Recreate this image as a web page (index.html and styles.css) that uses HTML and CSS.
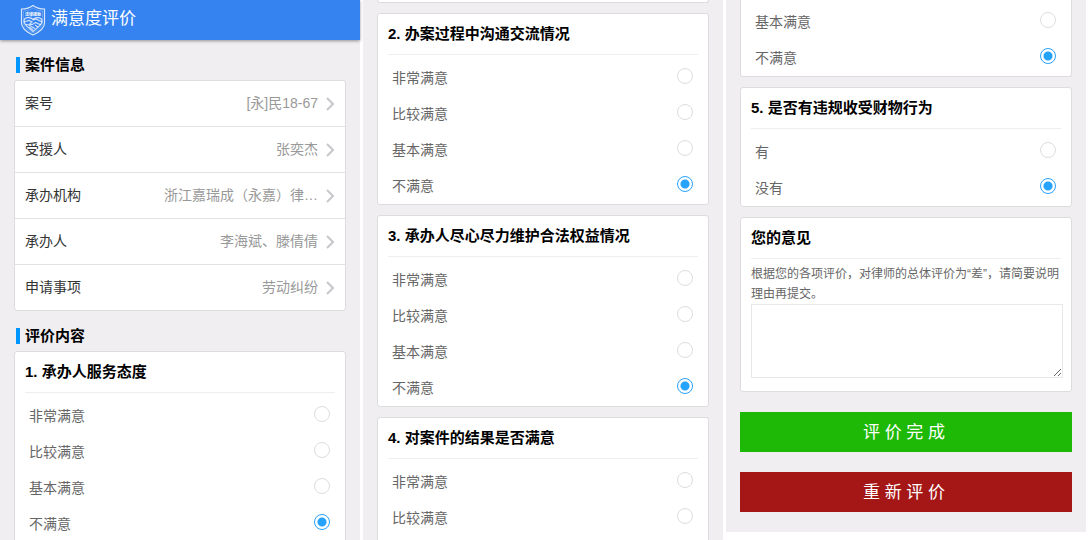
FILE: index.html
```
<!DOCTYPE html>
<html lang="zh-CN">
<head>
    <meta charset="UTF-8">
    <meta name="viewport" content="width=device-width, initial-scale=1.0">
    <title>满意度评价</title>
    <link rel="stylesheet" href="styles.css">
</head>
<body>
    <div class="pages">
        <div class="page">
            <header class="header">
                <svg class="logo" viewBox="0 0 26 32" aria-hidden="true">
                    <path class="shield" d="M13 1.500C10 3.800 6 5 1.500 5v14c0 5.500 5 9 11.500 12 6.500-3 11.500-6.500 11.500-12V5c-4.500 0-8.500-1.200-11.500-3.500z"/>
                    <path class="shield-inner" d="M13 4C10 6 7 7 3.500 7v12c0 4.500 4.500 7.200 9.500 9.800 5-2.600 9.500-5.300 9.500-9.800V7c-3.500 0-6.500-1-9.500-3z"/>
                    <text class="logo-text" x="13" y="12" text-anchor="middle">法律援助</text>
                    <path class="heart" d="M13 15.500c-2.500-3-9-2.500-9 1.800 0 3.700 5 6.700 9 10.200 4-3.500 9-6.500 9-10.200 0-4.300-6.500-4.800-9-1.800z"/>
                    <path class="heart" d="M4 18l5-1.500 3 1.500-2.500 2.200 3 .3 3-2 5.500 2.500M13 16l3-1 6 3M5.500 20.500l3.500.5 6 3.500M9 23l4 2.500M15 21l3 2"/>
                </svg>
                <h1>满意度评价</h1>
            </header>
            <main class="content">
                <h2 class="section-title">案件信息</h2>
                <ul class="card info">
                    <li><a href="#"><span>案号</span><span class="value">[永]民18-67</span><svg class="arrow" viewBox="0 0 8 14"><path d="M1 1l6 6-6 6"/></svg></a></li>
                    <li><a href="#"><span>受援人</span><span class="value">张奕杰</span><svg class="arrow" viewBox="0 0 8 14"><path d="M1 1l6 6-6 6"/></svg></a></li>
                    <li><a href="#"><span>承办机构</span><span class="value">浙江嘉瑞成（永嘉）律…</span><svg class="arrow" viewBox="0 0 8 14"><path d="M1 1l6 6-6 6"/></svg></a></li>
                    <li><a href="#"><span>承办人</span><span class="value">李海斌、滕倩倩</span><svg class="arrow" viewBox="0 0 8 14"><path d="M1 1l6 6-6 6"/></svg></a></li>
                    <li><a href="#"><span>申请事项</span><span class="value">劳动纠纷</span><svg class="arrow" viewBox="0 0 8 14"><path d="M1 1l6 6-6 6"/></svg></a></li>
                </ul>
                <h2 class="section-title">评价内容</h2>
                <section class="card">
                    <h3>1. 承办人服务态度</h3>
                    <div class="options">
                        <label>非常满意<input type="radio" name="q1"></label>
                        <label>比较满意<input type="radio" name="q1"></label>
                        <label>基本满意<input type="radio" name="q1"></label>
                        <label>不满意<input type="radio" name="q1" checked></label>
                    </div>
                </section>
            </main>
        </div>

        <div class="page">
            <div class="content">
                <div class="card card-end"></div>
                <section class="card">
                    <h3>2. 办案过程中沟通交流情况</h3>
                    <div class="options">
                        <label>非常满意<input type="radio" name="q2"></label>
                        <label>比较满意<input type="radio" name="q2"></label>
                        <label>基本满意<input type="radio" name="q2"></label>
                        <label>不满意<input type="radio" name="q2" checked></label>
                    </div>
                </section>
                <section class="card">
                    <h3>3. 承办人尽心尽力维护合法权益情况</h3>
                    <div class="options">
                        <label>非常满意<input type="radio" name="q3"></label>
                        <label>比较满意<input type="radio" name="q3"></label>
                        <label>基本满意<input type="radio" name="q3"></label>
                        <label>不满意<input type="radio" name="q3" checked></label>
                    </div>
                </section>
                <section class="card card-start">
                    <h3>4. 对案件的结果是否满意</h3>
                    <div class="options">
                        <label>非常满意<input type="radio" name="q4"></label>
                        <label>比较满意<input type="radio" name="q4"></label>
                    </div>
                </section>
            </div>
        </div>

        <div class="page page-last">
            <div class="content">
                <section class="card card-end">
                    <div class="options">
                        <label>基本满意<input type="radio" name="q4"></label>
                        <label>不满意<input type="radio" name="q4" checked></label>
                    </div>
                </section>
                <section class="card">
                    <h3>5. 是否有违规收受财物行为</h3>
                    <div class="options">
                        <label>有<input type="radio" name="q5"></label>
                        <label>没有<input type="radio" name="q5" checked></label>
                    </div>
                </section>
                <section class="card opinion">
                    <h3><label for="opinion">您的意见</label></h3>
                    <p>根据您的各项评价，对律师的总体评价为“差”，请简要说明理由再提交。</p>
                    <textarea id="opinion"></textarea>
                </section>
                <button class="btn btn-done" type="submit">评 价 完 成</button>
                <button class="btn btn-reset" type="reset">重 新 评 价</button>
            </div>
        </div>
    </div>
</body>
</html>
```

FILE: styles.css
```
* {
    box-sizing: border-box;
    margin: 0;
    padding: 0;
}

body {
    background-color: #fff;
    color: #333;
    font-family: "Liberation Sans", "Noto Sans CJK SC", sans-serif;
    font-size: 14px;
}

.pages {
    display: grid;
    grid-template-columns: 1fr 1fr 1fr;
    gap: 3px;
    height: 100vh;
    padding-right: 6px;
    overflow: hidden;
}

.page {
    display: flex;
    flex-direction: column;
    min-width: 0;
    min-height: 0;
    background-color: #f0eef1;
}

.page-last {
    align-self: start;
    padding-bottom: 20px;
}

.header {
    display: flex;
    align-items: center;
    gap: 5px;
    height: 40px;
    flex-shrink: 0;
    padding-left: 20px;
    background-color: #3483f0;
    color: #fff;
    box-shadow: 0 1px 3px rgba(0, 0, 0, 0.4);
}

.header h1 {
    font-size: 17px;
    font-weight: normal;
    line-height: 36px;
    padding-bottom: 2px;
}

.logo {
    width: 26px;
    height: 32px;
    fill: none;
    stroke: #fff;
}

.shield {
    stroke-width: 1.2;
    opacity: 0.8;
}

.shield-inner {
    stroke-width: 0.6;
    opacity: 0.4;
}

.heart {
    stroke-width: 1.2;
    opacity: 0.75;
}

.logo-text {
    font-size: 4px;
    font-weight: bold;
    fill: #fff;
    stroke: none;
}

.content {
    display: flex;
    flex-direction: column;
    flex: 1;
    padding: 0 14px;
}

.section-title {
    display: flex;
    align-items: center;
    gap: 5px;
    padding: 17px 2px 7px;
    font-size: 15px;
    line-height: 16px;
    color: #000;
}

.section-title::before {
    content: "";
    width: 4px;
    height: 16px;
    background-color: #0096ff;
}

.card {
    flex-shrink: 0;
    padding: 0 10px;
    background-color: #fff;
    border: 1px solid #dddcdf;
    border-radius: 3px;
}

.card + .card {
    margin-top: 10px;
}

/* a card carried over from the page before */
.card-end {
    border-top: none;
    border-radius: 0 0 3px 3px;
    padding-top: 2px;
}

/* a card that goes on to the next page */
.card-start {
    flex: 1 0 auto;
    border-bottom: none;
    border-radius: 3px 3px 0 0;
}

.card h3 {
    border-bottom: 1px solid #eee;
    font-size: 15px;
    line-height: 40px;
    color: #000;
}

.info {
    padding: 0;
    list-style: none;
}

.info li + li {
    border-top: 1px solid #e2e1e3;
}

.info a {
    display: flex;
    align-items: center;
    padding: 0 11px 0 10px;
    line-height: 45px;
    color: #333;
    text-decoration: none;
}

.value {
    margin-left: auto;
    color: #999;
    white-space: nowrap;
}

.arrow {
    width: 8px;
    height: 14px;
    margin-left: 8px;
    fill: none;
    stroke: #c7c7cc;
    stroke-width: 2;
}

.options {
    padding: 5px 5px 0 4px;
}

.card-end .options {
    padding-top: 2px;
}

.options label {
    display: flex;
    align-items: flex-start;
    justify-content: space-between;
    line-height: 36px;
    color: #666;
}

.options input {
    appearance: none;
    width: 16px;
    height: 16px;
    margin-top: 8px;
    background-color: #fff;
    border: 1px solid #ddd;
    border-radius: 50%;
}

.options input:checked {
    border-color: #26a2ff;
    background: radial-gradient(circle, #26a2ff 4px, #fff 5px);
}

.opinion {
    padding-bottom: 13px;
}

.opinion p {
    padding-top: 5px;
    font-size: 12px;
    line-height: 20px;
    color: #666;
}

.opinion textarea {
    display: block;
    box-sizing: content-box;
    width: 100%;
    height: 72px;
    border: 1px solid #e8e8e8;
    resize: vertical;
}

.btn {
    height: 40px;
    margin-top: 20px;
    padding: 0 4px 4px 0;
    border: none;
    color: #fff;
    font-family: inherit;
    font-size: 17px;
    cursor: pointer;
}

.btn-done {
    background-color: #1eb906;
}

.btn-reset {
    background-color: #a51616;
}
```
